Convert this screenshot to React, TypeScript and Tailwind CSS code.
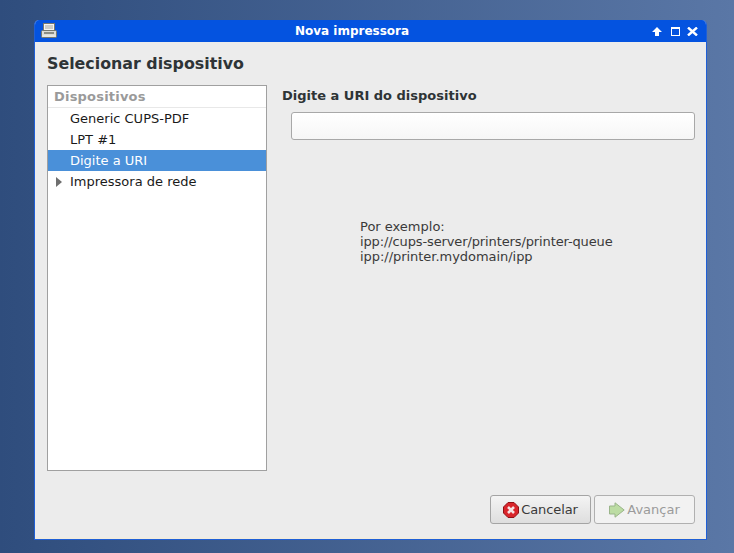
function PrinterIcon() {
  return (
    <svg width="16" height="16" viewBox="0 0 16 16">
      <rect x="2.500" y="0.500" width="11" height="9" fill="#f4f4f2" stroke="#77786f" />
      <path d="M4 3h8M4 5h8" stroke="#a5a69e" />
      <rect x="0.500" y="7.500" width="15" height="7" rx="1" fill="#dcdcd6" stroke="#77786f" />
      <rect x="3" y="9" width="10" height="2" fill="#8c8d85" />
      <rect x="1.500" y="12.500" width="13" height="1" fill="#f0f0ec" />
    </svg>
  );
}

function CancelIcon() {
  return (
    <svg width="16" height="16" viewBox="0 0 16 16">
      <path d="M5 .5h6L15.500 5v6L11 15.500H5L.5 11V5Z" fill="#d9252b" stroke="#8f1116" />
      <path d="M5 5l6 6M11 5l-6 6" stroke="#f6e4e4" strokeWidth="2.600" />
    </svg>
  );
}

function NextIcon() {
  return (
    <svg width="16" height="16" viewBox="0 0 16 16">
      <path d="M.5 4H6V.8L15.200 8 6 15.200V12H.5Z" fill="#bcdca3" stroke="#9ab58a" />
    </svg>
  );
}

const rows = ["Generic CUPS-PDF", "LPT #1", "Digite a URI", "Impressora de rede"];

export default function App() {
  return (
    <div
      className="w-[734px] h-[553px] overflow-hidden pl-[34px] pt-[20px] bg-gradient-to-r from-[#2f4d7d] to-[#5a77a6] text-[#2e3436]"
      style={{ fontFamily: '"DejaVu Sans", sans-serif' }}
    >
      <div className="w-[673px] h-[520px] flex flex-col rounded-t-[5px] overflow-hidden border-x border-b border-[#1f5fd6] bg-[#ececec]">
        <div className="h-[22px] shrink-0 flex items-center bg-[#0453e0] text-white pl-[6px] pr-[8px]">
          <PrinterIcon />
          <div className="flex-1 text-center text-[12px] font-bold pr-[5px]">Nova impressora</div>
          <div className="flex items-center gap-[7px]">
            <svg width="10" height="9" viewBox="0 0 10 9" className="mr-[2px]">
              <path d="M5 0l5 5H7v4H3V5H0Z" fill="#fff" />
            </svg>
            <div className="w-[9px] h-[9px] border border-white border-t-2" />
            <svg width="11" height="9" viewBox="0 0 11 9">
              <path d="M1 .5l9 8M10 .5l-9 8" stroke="#fff" strokeWidth="2.400" />
            </svg>
          </div>
        </div>
        <div className="flex-1 flex flex-col pl-[12px] pr-[11px]">
          <h1 className="text-[15.850px] font-bold leading-[18px] mt-[13px]">Selecionar dispositivo</h1>
          <div className="flex mt-[12px] gap-[15px]">
            <div className="w-[220px] h-[386px] shrink-0 border border-[#a0a0a0] bg-white text-[13px]">
              <div className="h-[22px] px-[6px] flex items-center border-b border-[#e8e8e8] font-bold text-[#9a9a9a] tracking-[0.2px]">
                Dispositivos
              </div>
              {rows.map((r, i) => (
                <div
                  key={r}
                  className={`h-[21px] flex items-center pl-[22px] relative ${i === 2 ? "bg-[#4a90d9] text-white" : "text-[#1a1a1a]"}`}
                >
                  {i === 3 && (
                    <svg width="6" height="10" viewBox="0 0 6 10" className="absolute left-[8px] top-[6px]">
                      <path d="M0 0l6 5-6 5Z" fill="#6f6f6f" />
                    </svg>
                  )}
                  {r}
                </div>
              ))}
            </div>
            <div className="flex-1">
              <div className="text-[13px] font-bold leading-[16px] mt-[3px]">Digite a URI do dispositivo</div>
              <div className="ml-[9px] mt-[8px] h-[28px] rounded-[3px] border border-[#a8a8a8] bg-gradient-to-b from-white to-[#f6f6f6]" />
              <div className="ml-[78px] mt-[79px] text-[13px] leading-[15px] text-[#3a3a3a]">
                <div>Por exemplo:</div>
                <div className="tracking-[-0.12px]">ipp://cups-server/printers/printer-queue</div>
                <div className="tracking-[-0.04px]">ipp://printer.mydomain/ipp</div>
              </div>
            </div>
          </div>
          <div className="flex justify-end gap-[3px] mt-[24px]">
            <button className="w-[101px] h-[29px] flex items-center justify-center gap-[2px] rounded-[3px] border border-[#a4a4a4] bg-gradient-to-b from-[#f4f4f4] to-[#dedede] text-[13px] tracking-[-0.1px] text-[#3a3a3a]">
              <CancelIcon />
              Cancelar
            </button>
            <button className="w-[101px] h-[29px] flex items-center justify-center gap-[2px] rounded-[3px] border border-[#b0b0b0] bg-[#f2f2f2] text-[13px] text-[#9b9b9b]">
              <NextIcon />
              Avançar
            </button>
          </div>
        </div>
        <div className="h-[2px] shrink-0 bg-[#f1ece0]" />
      </div>
    </div>
  );
}
